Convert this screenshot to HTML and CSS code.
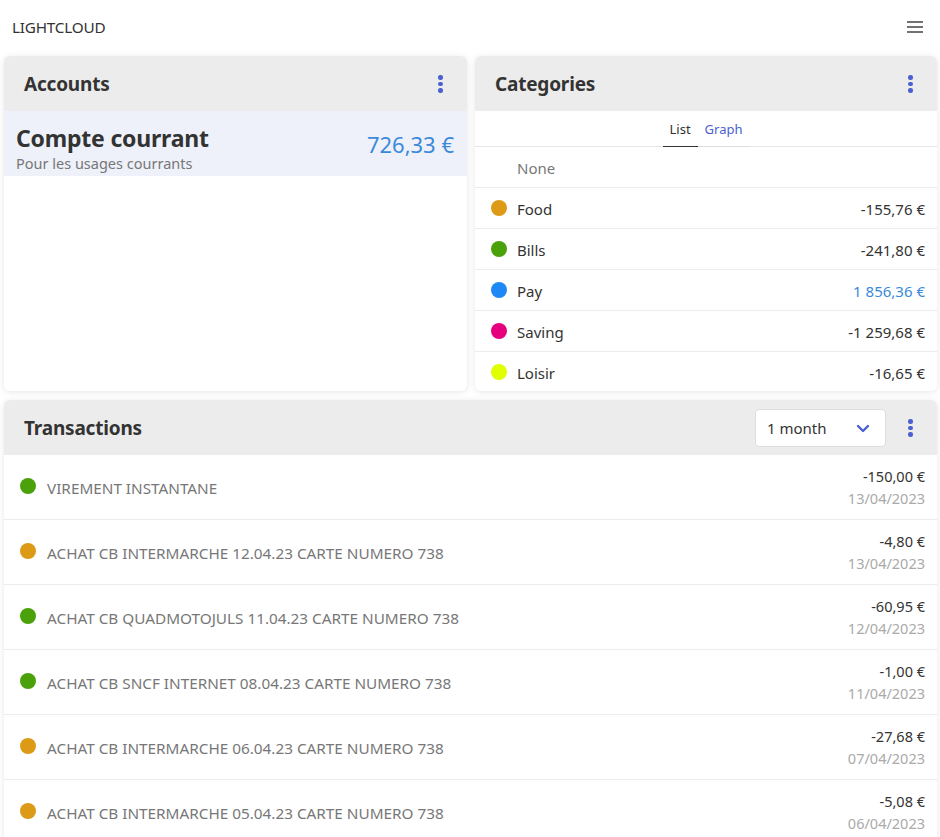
FILE: index.html
```html
<!DOCTYPE html>
<html>
<head>
<meta charset="utf-8">
<link rel="stylesheet" href="styles.css">
</head>
<body>
<header class="topbar">
  <span class="brand">LIGHTCLOUD</span>
  <svg class="burger" width="18" height="14" viewBox="0 0 18 14"><path d="M1 2h16M1 7h16M1 12h16" stroke="#444" stroke-width="1.5"/></svg>
</header>
<main class="grid">
  <section class="card">
    <div class="card-head">
      <h2>Accounts</h2>
      <span class="kebab"><i></i><i></i><i></i></span>
    </div>
    <div class="account">
      <div class="acc-text">
        <div class="acc-name">Compte courrant</div>
        <div class="acc-sub">Pour les usages courrants</div>
      </div>
      <div class="acc-amount">726,33 €</div>
    </div>
  </section>
  <section class="card">
    <div class="card-head">
      <h2>Categories</h2>
      <span class="kebab"><i></i><i></i><i></i></span>
    </div>
    <div class="tabs">
      <span class="tab active">List</span>
      <span class="tab">Graph</span>
    </div>
    <ul class="cats">
      <li class="cat"><span class="dot none"></span><span class="cat-name muted">None</span></li>
      <li class="cat"><span class="dot food"></span><span class="cat-name">Food</span><span class="cat-val">-155,76 €</span></li>
      <li class="cat"><span class="dot bills"></span><span class="cat-name">Bills</span><span class="cat-val">-241,80 €</span></li>
      <li class="cat"><span class="dot pay"></span><span class="cat-name">Pay</span><span class="cat-val pos">1 856,36 €</span></li>
      <li class="cat"><span class="dot saving"></span><span class="cat-name">Saving</span><span class="cat-val">-1 259,68 €</span></li>
      <li class="cat"><span class="dot loisir"></span><span class="cat-name">Loisir</span><span class="cat-val">-16,65 €</span></li>
    </ul>
  </section>
  <section class="card wide">
    <div class="card-head">
      <h2>Transactions</h2>
      <div class="head-tools">
        <div class="select">
          <span>1 month</span>
          <svg width="14" height="9" viewBox="0 0 14 9"><path d="M2 2l5 5 5-5" fill="none" stroke="#4a5fd0" stroke-width="2.4" stroke-linecap="round" stroke-linejoin="round"/></svg>
        </div>
        <span class="kebab"><i></i><i></i><i></i></span>
      </div>
    </div>
    <ul class="txs">
      <li class="tx"><span class="dot bills"></span><span class="tx-label">VIREMENT INSTANTANE</span><span class="tx-right"><span class="tx-amt">-150,00 €</span><span class="tx-date">13/04/2023</span></span></li>
      <li class="tx"><span class="dot food"></span><span class="tx-label">ACHAT CB INTERMARCHE 12.04.23 CARTE NUMERO 738</span><span class="tx-right"><span class="tx-amt">-4,80 €</span><span class="tx-date">13/04/2023</span></span></li>
      <li class="tx"><span class="dot bills"></span><span class="tx-label">ACHAT CB QUADMOTOJULS 11.04.23 CARTE NUMERO 738</span><span class="tx-right"><span class="tx-amt">-60,95 €</span><span class="tx-date">12/04/2023</span></span></li>
      <li class="tx"><span class="dot bills"></span><span class="tx-label">ACHAT CB SNCF INTERNET 08.04.23 CARTE NUMERO 738</span><span class="tx-right"><span class="tx-amt">-1,00 €</span><span class="tx-date">11/04/2023</span></span></li>
      <li class="tx"><span class="dot food"></span><span class="tx-label">ACHAT CB INTERMARCHE 06.04.23 CARTE NUMERO 738</span><span class="tx-right"><span class="tx-amt">-27,68 €</span><span class="tx-date">07/04/2023</span></span></li>
      <li class="tx"><span class="dot food"></span><span class="tx-label">ACHAT CB INTERMARCHE 05.04.23 CARTE NUMERO 738</span><span class="tx-right"><span class="tx-amt">-5,08 €</span><span class="tx-date">06/04/2023</span></span></li>
    </ul>
  </section>
</main>
</body>
</html>
```
FILE: styles.css
```css
* { box-sizing: border-box; }
html, body { margin: 0; padding: 0; }
body {
  font-family: "Noto Sans", "Open Sans", sans-serif;
  color: #333;
  background: #fff;
  overflow: hidden;
}
ul { list-style: none; margin: 0; padding: 0; }
h2 { margin: 0; }

.topbar {
  height: 56px;
  display: flex;
  align-items: center;
  justify-content: space-between;
  padding: 0 16px 2px 12px;
}
.brand { font-size: 15.3px; color: #333; letter-spacing: -0.2px; }
.burger { display: block; }

.grid {
  display: grid;
  grid-template-columns: 463px 462px;
  column-gap: 8px;
  row-gap: 9px;
  padding: 0 3px 0 4px;
  grid-template-rows: 335px auto;
}
.card {
  background: #fff;
  border-radius: 6px;
  box-shadow: 0 1px 6px rgba(0,0,0,0.10);
  overflow: hidden;
}
.card.wide { grid-column: 1 / 3; }
.card-head {
  height: 55px;
  background: #ececec;
  display: flex;
  align-items: center;
  justify-content: space-between;
  padding: 1px 20px 0 20px;
}
.card-head h2 { font-size: 19px; font-weight: 700; color: #333; letter-spacing: -0.2px; }
.kebab { display: flex; flex-direction: column; gap: 2px; width: 5px; margin-right: 4px; }
.kebab i { display: block; width: 4.5px; height: 4.5px; border-radius: 50%; background: #4a5fd0; }

.account {
  height: 65px;
  background: #eef1f9;
  display: flex;
  align-items: flex-start;
  justify-content: space-between;
  padding: 0 13px 0 12px;
}
.acc-text { padding-top: 12px; }
.acc-name { font-size: 23px; font-weight: 700; color: #333; line-height: 30px; letter-spacing: -0.2px; }
.acc-sub { font-size: 14.5px; color: #777; line-height: 20px; margin-top: 0; }
.acc-amount { font-size: 22px; color: #3b8ad9; line-height: 30px; padding-top: 18px; }

.tabs {
  height: 36px;
  display: flex;
  justify-content: center;
  align-items: stretch;
  border-bottom: 1px solid #e6e6e6;
}
.tab {
  font-size: 13px;
  display: flex;
  align-items: center;
  padding: 0 7px;
  color: #4a5fd0;
  border-bottom: 1px solid #ddd;
  margin-bottom: -1px;
}
.tab.active { color: #333; border-bottom: 1.5px solid #333; }

.cat {
  height: 41px;
  display: flex;
  align-items: center;
  padding: 1px 12px 0 16px;
  border-bottom: 1px solid #ececec;
  font-size: 15px;
}
.cat:last-child { border-bottom: none; }
.dot { width: 16px; height: 16px; border-radius: 50%; flex: none; }
.cat .dot { margin-top: -2px; }
.dot.none { background: transparent; }
.food { background: #dc9a16; }
.bills { background: #4aa10a; }
.pay { background: #1e88f5; }
.saving { background: #e6007e; }
.loisir { background: #e0ff00; }
.cat-name { margin-left: 10px; color: #333; flex: 1; }
.cat-name.muted { color: #777; }
.cat-val { color: #333; }
.cat-val.pos { color: #3b8ad9; }

.head-tools { display: flex; align-items: center; gap: 22px; }
.select {
  width: 131px;
  height: 38px;
  background: #fff;
  border: 1px solid #ddd;
  border-radius: 4px;
  display: flex;
  align-items: center;
  justify-content: space-between;
  padding: 0 15px 0 11px;
  font-size: 15px;
  color: #333;
}
.select svg { display: block; }

.tx {
  height: 65px;
  display: flex;
  align-items: center;
  padding: 0 12px 0 16px;
  border-bottom: 1px solid #ececec;
}
.tx .dot { margin-top: -2px; }
.tx-label { margin-left: 11px; flex: 1; font-size: 15.3px; color: #777; margin-top: 1px; }
.tx-right { display: flex; flex-direction: column; align-items: flex-end; }
.tx-amt { font-size: 14.5px; color: #333; line-height: 22px; }
.tx-date { font-size: 14.5px; color: #aaa; line-height: 22px; }
```
